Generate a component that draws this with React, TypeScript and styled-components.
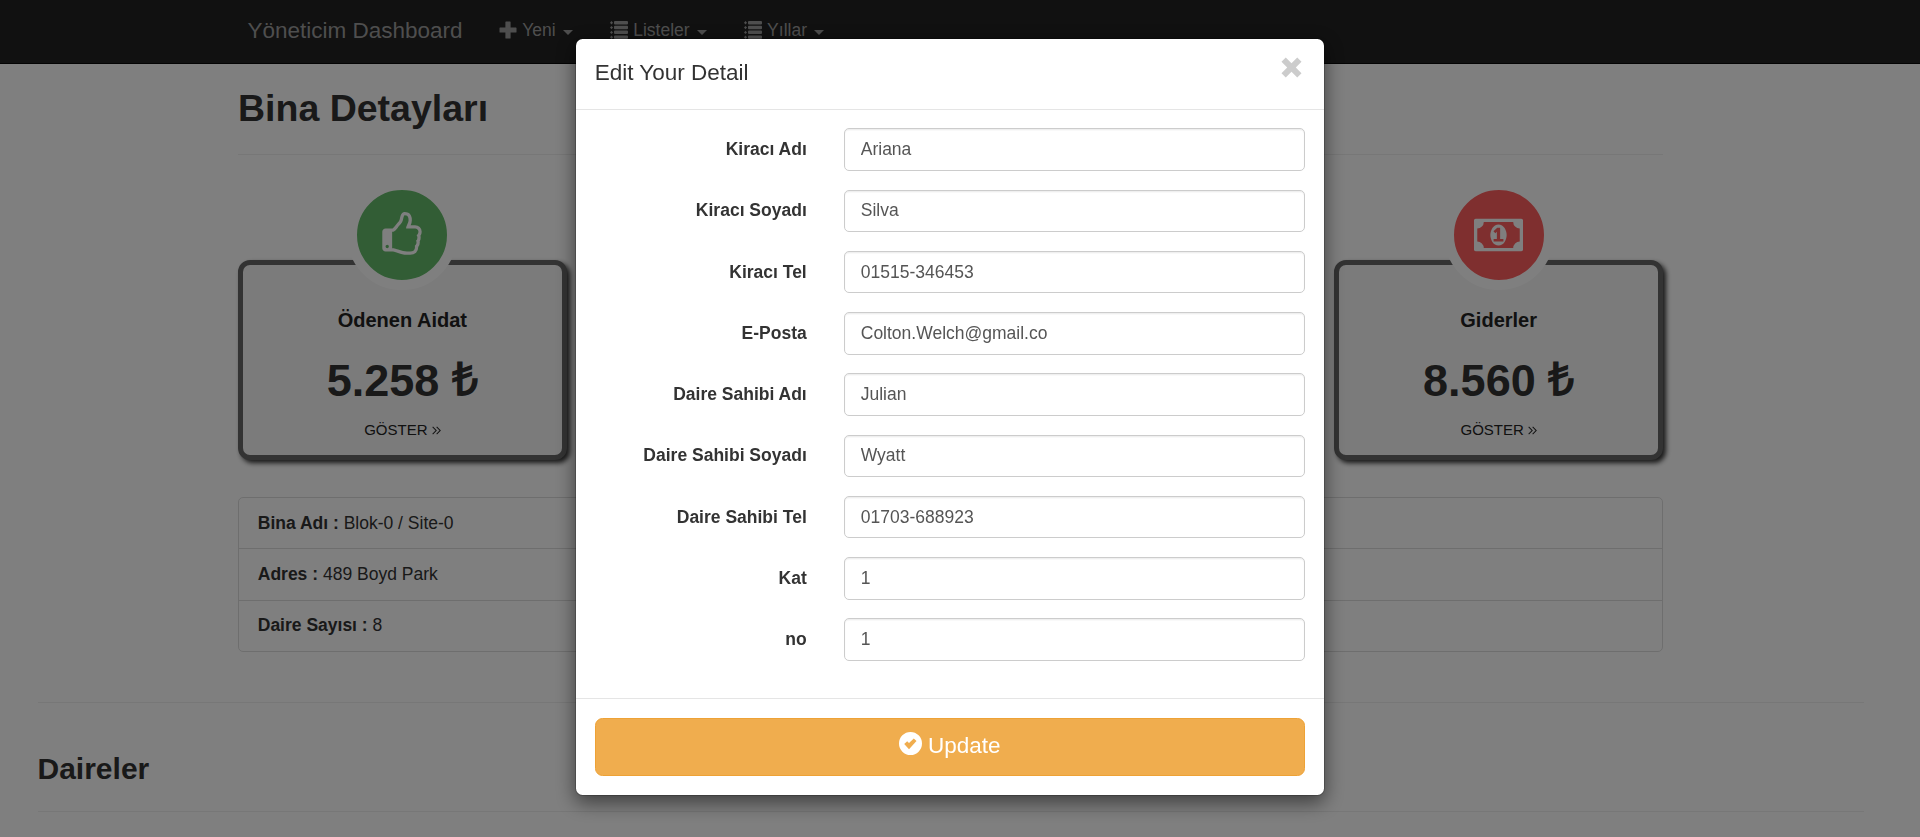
import React from "react";
import styled, { createGlobalStyle } from "styled-components";

const GlobalStyle = createGlobalStyle`
  *, *::before, *::after { box-sizing: border-box; }
  html, body { height: 100%; }
  body {
    margin: 0;
    overflow: hidden;
    background: #fff;
    color: #333;
    font-family: "Liberation Sans", Arial, sans-serif;
    font-size: 17.5px;
    line-height: 25px;
  }
`;

const Page = styled.div`
  height: 837px;
  padding-right: 19px;
  overflow: hidden;
`;

const Navbar = styled.nav`
  height: 64px;
  margin-right: -19px;
  padding-right: 19px;
  background: #222;
  border-bottom: 1px solid #080808;
`;

const Container = styled.div`
  width: 1425px;
  margin: 0 auto;
`;

const NavRow = styled(Container)`
  display: flex;
  align-items: center;
  height: 61px;
  padding-left: 9.5px;
  color: #9d9d9d;
`;

const Brand = styled.span`
  font-size: 22.5px;
  width: 233px;
`;

const NavItem = styled.a`
  display: flex;
  align-items: center;
  padding: 0 18.75px;
`;

const NavIcon = styled.svg`
  width: 18px;
  height: 18px;
  margin: -1px 5px 0 0;
  fill: currentColor;
`;

const Caret = styled.span`
  margin: 4px 0 0 7px;
  border-top: 5px solid currentColor;
  border-left: 5px solid transparent;
  border-right: 5px solid transparent;
`;

const PageTitle = styled.h1`
  margin: 0 0 25px;
  padding: 22px 0 23px;
  border-bottom: 1px solid #eee;
  font-size: 37.5px;
  line-height: 45px;
  font-weight: 700;
`;

const Cards = styled.div`
  display: flex;
  justify-content: space-between;
  padding-top: 80px;
`;

const Card = styled.section`
  position: relative;
  width: 328.7px;
  height: 200px;
  padding-top: 41px;
  border: 5px solid #666;
  border-radius: 12px;
  background: #f7f7f7;
  box-shadow: 3px 3px 5px #333;
  text-align: center;
`;

const Badge = styled.div<{ $color: string }>`
  position: absolute;
  left: 50%;
  top: -85px;
  width: 110px;
  height: 110px;
  margin-left: -55px;
  display: flex;
  align-items: center;
  justify-content: center;
  border: 10px solid #fff;
  border-radius: 50%;
  background: ${(p) => p.$color};
`;

const BadgeIcon = styled.svg<{ $w: number }>`
  width: ${(p) => p.$w}px;
  height: 46px;
  fill: #fff;
`;

const CardTitle = styled.div`
  color: #222;
  font-size: 20px;
  font-weight: 700;
  line-height: 28px;
`;

const Amount = styled.div`
  margin-top: 22px;
  font-size: 45px;
  font-weight: 700;
  line-height: 50px;
`;

const Currency = styled.span`
  font-size: 46px;
  line-height: 0;
  vertical-align: 1.5px;
`;

const More = styled.a`
  display: flex;
  align-items: center;
  justify-content: center;
  gap: 4px;
  margin-top: 11px;
  color: #222;
  font-size: 15px;
  line-height: 25px;
`;

const MoreIcon = styled.svg`
  width: 9px;
  height: 15px;
  margin-top: 2px;
  fill: currentColor;
`;

const InfoList = styled.div`
  margin-top: 37px;
  border: 1px solid #ddd;
  border-radius: 5px;
`;

const InfoRow = styled.div`
  height: 50.3px;
  padding: 12.5px 18.75px;
  & + & {
    height: 51.5px;
    border-top: 1px solid #ddd;
  }
`;

const Section = styled.section`
  margin: 50px 37.5px 0;
  border-top: 1px solid #eee;
`;

const SectionTitle = styled.h2`
  margin: 0;
  padding: 47px 0 24px;
  border-bottom: 1px solid #eee;
  font-size: 30px;
  line-height: 37px;
  font-weight: 700;
`;

const Backdrop = styled.div`
  position: fixed;
  inset: 0;
  padding: 37.65px 20px 0 0;
  background: rgba(0, 0, 0, 0.5);
`;

const Modal = styled.form`
  width: 750px;
  margin: 0 auto;
  background: #fff;
  background-clip: padding-box;
  border: 1px solid rgba(0, 0, 0, 0.2);
  border-radius: 7.5px;
  box-shadow: 0 6.25px 18.75px rgba(0, 0, 0, 0.5);
`;

const ModalHeader = styled.header`
  display: flex;
  justify-content: space-between;
  height: 71px;
  padding: 18.75px;
  border-bottom: 1px solid #e5e5e5;
`;

const ModalTitle = styled.h4`
  margin: 0;
  font-size: 22.5px;
  font-weight: 500;
  line-height: 31px;
`;

const CloseIcon = styled.svg`
  width: 21px;
  height: 21px;
  margin-right: 3px;
  fill: #ccc;
`;

const ModalBody = styled.div`
  height: 588.5px;
  padding: 18.75px;
`;

const Field = styled.div`
  display: grid;
  grid-template-columns: 212px 461px;
  justify-content: space-between;
  margin-bottom: 18.75px;
`;

const Label = styled.label`
  padding-top: 8.75px;
  text-align: right;
  font-weight: 700;
`;

const Input = styled.input`
  height: 42.5px;
  padding: 7.5px 15.5px;
  border: 1px solid #ccc;
  border-radius: 5px;
  box-shadow: inset 0 1.25px 1.25px rgba(0, 0, 0, 0.075);
  color: #555;
  font: inherit;
  outline: none;
`;

const ModalFooter = styled.footer`
  padding: 18.75px;
  border-top: 1px solid #e5e5e5;
`;

const UpdateButton = styled.button`
  display: flex;
  align-items: center;
  justify-content: center;
  gap: 5.5px;
  width: 100%;
  height: 58px;
  padding: 0 0 2px;
  border: 1px solid #eea236;
  border-radius: 7.5px;
  background: #f0ad4e;
  color: #fff;
  font: 22.5px/30px "Liberation Sans", Arial, sans-serif;
`;

const UpdateIcon = styled.svg`
  width: 23px;
  height: 23px;
  margin-top: -4px;
  fill: currentColor;
`;

const PLUS = "M7 .5h4q.6 0 .6.6V6.400h5.300q.6 0 .6.6v4q0 .6-.6.6h-5.300v5.300q0 .6-.6.6H7q-.6 0-.6-.6v-5.300H1.100Q.5 11.600.5 11V7q0-.6.6-.6h5.300V1.100Q6.400.5 7 .5z";
const LIST = "M1.500 0 3 1.700 1.500 3.400 0 1.700zM1.500 4.900 3 6.600 1.500 8.300 0 6.600zM1.500 9.700 3 11.400 1.500 13.100 0 11.400zM1.500 14.500 3 16.200 1.500 17.900 0 16.200zM5 0h12q1 0 1 1v1.500q0 1-1 1H5q-1 0-1-1V1q0-1 1-1zM5 4.800h12q1 0 1 1v1.500q0 1-1 1H5q-1 0-1-1V5.800q0-1 1-1zM5 9.600h12q1 0 1 1v1.500q0 1-1 1H5q-1 0-1-1v-1.500q0-1 1-1zM5 14.400h12q1 0 1 1v1.500q0 1-1 1H5q-1 0-1-1v-1.500q0-1 1-1z";
const THUMB =
  "M384 1344q0-26-19-45t-45-19-45 19-19 45 19 45 45 19 45-19 19-45zm1152-576q0-51-39-89.5t-89-38.5h-352q0-58 48-159.5t48-160.5q0-98-32-145t-128-47q-26 26-38 85t-30.5 125.5-59.5 109.5q-22 23-77 91-4 5-23 30t-31.5 41-34.5 42.5-40 44-38.5 35.5-40 27-35.5 9h-32v640h32q13 0 31.5 3t33 6.5 38 11 35 11.5 35.5 12.5 29 10.5q211 73 342 73h121q192 0 192-167 0-26-5-56 30-16 47.5-52.5t17.5-73.5-18-69q53-50 53-119 0-25-10-55.5t-25-47.5q32-1 53.5-47t21.5-81zm128-1q0 89-49 163 9 33 9 69 0 77-38 144 3 21 3 43 0 101-60 178 1 139-85 219.5t-227 80.5h-129q-96 0-189.5-22.5t-216.5-65.500q-116-40-138-40h-288q-53 0-90.5-37.5t-37.5-90.5v-640q0-53 37.5-90.5t90.5-37.5h274q36-24 137-155 58-75 107-128 24-25 35.5-85.5t30.5-126.5 62-108q39-37 90-37 84 0 151 32.5t102 101.5 35 186q0 93-48 192h176q104 0 180 76t76 179z";
const MONEY =
  "M768 1152h384v-96h-128v-448h-114l-148 137 77 80q42-37 55-57h2v288h-128v96zm512-256q0 70-21 142t-59.5 134-101.5 101-138 39-138-39-101.5-101-59.5-134-21-142 21-142 59.5-134 101.5-101 138-39 138 39 101.5 101 59.5 134 21 142zm512 256v-512q-106 0-181-75t-75-181h-1152q0 106-75 181t-181 75v512q106 0 181 75t75 181h1152q0-106 75-181t181-75zm128-832v1152q0 26-19 45t-45 19h-1792q-26 0-45-19t-19-45v-1152q0-26 19-45t45-19h1792q26 0 45 19t19 45z";

const fields: [string, string][] = [
  ["Kiracı Adı", "Ariana"],
  ["Kiracı Soyadı", "Silva"],
  ["Kiracı Tel", "01515-346453"],
  ["E-Posta", "Colton.Welch@gmail.co"],
  ["Daire Sahibi Adı", "Julian"],
  ["Daire Sahibi Soyadı", "Wyatt"],
  ["Daire Sahibi Tel", "01703-688923"],
  ["Kat", "1"],
  ["no", "1"],
];

const menus = [
  { label: "Yeni", path: PLUS },
  { label: "Listeler", path: LIST },
  { label: "Yıllar", path: LIST },
];

const info = [
  ["Bina Adı :", "Blok-0 / Site-0"],
  ["Adres :", "489 Boyd Park"],
  ["Daire Sayısı :", "8"],
];

function SummaryCard(props: { title: string; amount: string; color: string; icon: string; wide?: boolean }) {
  return (
    <Card>
      <Badge $color={props.color}>
        <BadgeIcon $w={props.wide ? 49 : 46} viewBox={props.wide ? "0 0 1920 1792" : "0 0 1792 1792"}>
          <path d={props.icon} />
        </BadgeIcon>
      </Badge>
      <CardTitle>{props.title}</CardTitle>
      <Amount>
        {props.amount} <Currency>₺</Currency>
      </Amount>
      <More>
        GÖSTER
        <MoreIcon viewBox="0 0 9 15">
          <path d="M.3 4.300 1 3.600 4.900 7.500 1 11.400.3 10.700 3.500 7.500zM4.300 4.300 5 3.600 8.900 7.500 5 11.400 4.300 10.700 7.500 7.500z" />
        </MoreIcon>
      </More>
    </Card>
  );
}

export default function App() {
  return (
    <>
      <GlobalStyle />
      <Page>
        <Navbar>
          <NavRow>
            <Brand>Yöneticim Dashboard</Brand>
            {menus.map((m) => (
              <NavItem key={m.label}>
                <NavIcon viewBox="0 0 18 18">
                  <path d={m.path} />
                </NavIcon>
                {m.label}
                <Caret />
              </NavItem>
            ))}
          </NavRow>
        </Navbar>
        <Container>
          <PageTitle>Bina Detayları</PageTitle>
          <Cards>
            <SummaryCard title="Ödenen Aidat" amount="5.258" color="#64bb6a" icon={THUMB} />
            <SummaryCard title="Giderler" amount="8.560" color="#ff5e5e" icon={MONEY} wide />
          </Cards>
          <InfoList>
            {info.map(([k, v]) => (
              <InfoRow key={k}>
                <b>{k}</b> {v}
              </InfoRow>
            ))}
          </InfoList>
        </Container>
        <Section>
          <SectionTitle>Daireler</SectionTitle>
        </Section>
      </Page>
      <Backdrop>
        <Modal>
          <ModalHeader>
            <ModalTitle>Edit Your Detail</ModalTitle>
            <CloseIcon viewBox="0 0 22 22">
              <path d="M5 .5 11 6.500 17 .5 21.500 5 15.500 11 21.500 17 17 21.500 11 15.500 5 21.500.5 17 6.500 11 .5 5z" />
            </CloseIcon>
          </ModalHeader>
          <ModalBody>
            {fields.map(([label, value]) => (
              <Field key={label}>
                <Label>{label}</Label>
                <Input defaultValue={value} />
              </Field>
            ))}
          </ModalBody>
          <ModalFooter>
            <UpdateButton type="button">
              <UpdateIcon viewBox="0 0 23 23">
                <path
                  fillRule="evenodd"
                  d="M11.500 0a11.500 11.500 0 1 0 0 23a11.500 11.500 0 1 0 0-23zM10 17.200 5.200 12 8.200 9.200 10 11 14.800 6.500 17.500 9z"
                />
              </UpdateIcon>
              Update
            </UpdateButton>
          </ModalFooter>
        </Modal>
      </Backdrop>
    </>
  );
}
